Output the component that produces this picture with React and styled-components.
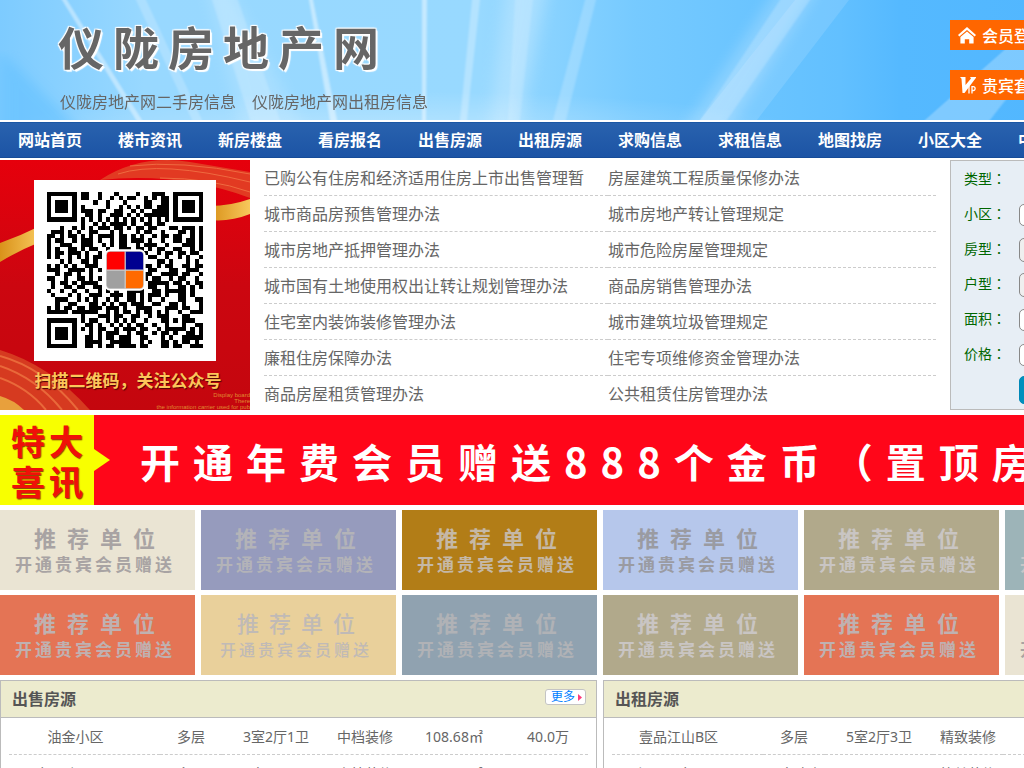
import React from "react";
import styled, { createGlobalStyle } from "styled-components";

const navItems = [
  "网站首页",
  "楼市资讯",
  "新房楼盘",
  "看房报名",
  "出售房源",
  "出租房源",
  "求购信息",
  "求租信息",
  "地图找房",
  "小区大全",
  "中介机构",
];

const articles = [
  "已购公有住房和经济适用住房上市出售管理暂",
  "房屋建筑工程质量保修办法",
  "城市商品房预售管理办法",
  "城市房地产转让管理规定",
  "城市房地产抵押管理办法",
  "城市危险房屋管理规定",
  "城市国有土地使用权出让转让规划管理办法",
  "商品房销售管理办法",
  "住宅室内装饰装修管理办法",
  "城市建筑垃圾管理规定",
  "廉租住房保障办法",
  "住宅专项维修资金管理办法",
  "商品房屋租赁管理办法",
  "公共租赁住房管理办法",
];

const ads = [
  { bg: "#eae4d3", color: "#a8a3a3" },
  { bg: "#969bbd", color: "#b3b3b8" },
  { bg: "#b27d17", color: "#c5b8a6" },
  { bg: "#b6c7eb", color: "#9a9ba2" },
  { bg: "#b1a98b", color: "#c9c5c3" },
  { bg: "#9db4b8", color: "#c5c7c9" },
  { bg: "#e47455", color: "#bfb1b1" },
  { bg: "#e9d09b", color: "#c0bab6", light: true },
  { bg: "#90a2b0", color: "#b0b2b6" },
  { bg: "#b1a98b", color: "#c9c5c3" },
  { bg: "#e47455", color: "#bfb1b1" },
  { bg: "#eae4d3", color: "#a8a3a3" },
];

const saleRows = [
  ["油金小区", "多层", "3室2厅1卫", "中档装修", "108.68㎡", "40.0万"],
  ["春晖路158号", "多层", "4室2厅2卫", "中档装修", "146.09㎡", "60.8万"],
];

const rentRows = [
  ["壹品江山B区", "多层", "5室2厅3卫", "精致装修"],
  ["红云国文翠园", "四室改中", "", "简单装修"],
];

const qrRows = [
  "#######.##..#...#....#...###..#######",
  "#.....#.##..#..#.#.##..#.#.##.#.....#",
  "#.###.#....#..#...#....##..##.#.###.#",
  "#.###.#.#.....#..#.#.#.##.###.#.###.#",
  "#.###.#.###.##..##..#.#..####.#.###.#",
  "#.....#..##.#..###.#.#.######.#.....#",
  "#######.#.#.#.#.#.#.#.#.#.#.#.#######",
  "........#..#.#.####.#..##.##.........",
  "...#..#.#.#.###.##.#.##.##...##.###.#",
  ".###.#.#..##...#.#...#.##..#...##.#.#",
  "##.#.##.#.#.####.##.#.#..#.##.##..#.#",
  "#.##..#.###.#..#.##.###.#..#..##.##.#",
  "#..###..###..#.#.##..#.###..#...###.#",
  "#.#..##.#.##..#..###.##.#.##..##..#.#",
  "#.##.###.#..#..........#..#.##.##.##.",
  "#.#..#.#.#.##...........##..#..#.#..#",
  "...#.#..##.#..............##.#...#.#.",
  "#.#.#.#..###...........##.#.##..##.##",
  "###..####.#.#...........##...##..###.",
  "..#.##.#..#............##..####.##..#",
  "##..#..##.#.#..........#.##..#.##..#.",
  ".#.##.#.####............#####.##.#.##",
  ".#..##.##..##...........##..#..##.#.#",
  "#..#..#..#..#.#.#..####..##.#####.#..",
  ".#...#.#..###..###.##.#.###.#..##.#..",
  "..###..#.#.#..#.#..##.#.#..#...##..##",
  "..#..##...##.#.#.##.###..##..##.#...#",
  "#.#.##.##.###.###.#..####...###.##..#",
  "#####.######..#.#.##.#.##.#.#..#..###",
  "........#...###.##..##..#.###...##...",
  "#######.#.##..#.#.#.#..#...##.#.###..",
  "#.....#..##.#..#.#.#.##..#..#...#..##",
  "#.###.#.#.#.##..#.###.##..#.#####.#.#",
  "#.###.#...#.#.###..#.##..#.##.#..##.#",
  "#.###.#..##.#.##.###..##...#.#..#####",
  "#.....#..####..#####..#.#..##.#.##.#.",
  "#######..##.#.##.####.##...##.##..###",
];

const Rays = () => (
  <RaysSvg viewBox="0 0 1200 120" preserveAspectRatio="none" aria-hidden="true">
    <defs>
      <linearGradient id="sky" x1="0" x2="1" y1="0" y2="0">
        <stop offset="0" stopColor="#7dcbff" />
        <stop offset="0.12" stopColor="#98d8ff" />
        <stop offset="0.4" stopColor="#98d9ff" />
        <stop offset="0.53" stopColor="#76caff" />
        <stop offset="0.7" stopColor="#62c0ff" />
        <stop offset="0.75" stopColor="#55b9ff" />
        <stop offset="1" stopColor="#4eb5ff" />
      </linearGradient>
      <radialGradient id="lift" cx="0.33" cy="1.1" r="0.34">
        <stop offset="0" stopColor="#fff" stopOpacity="0.3" />
        <stop offset="1" stopColor="#fff" stopOpacity="0" />
      </radialGradient>
      <filter id="soft" x="-20%" y="-20%" width="140%" height="140%">
        <feGaussianBlur stdDeviation="1 0" />
      </filter>
      <filter id="wide" x="-50%" y="-20%" width="200%" height="140%">
        <feGaussianBlur stdDeviation="8 0" />
      </filter>
    </defs>
    <rect width="1200" height="120" fill="url(#sky)" />
    <rect width="1200" height="120" fill="url(#lift)" />
    <path d="M0 50L0 120 70 120Z" fill="#5fbfff" opacity="0.5" filter="url(#wide)" />
    <path d="M210 0L235 0 300 120 240 120Z" fill="#fff" opacity="0.15" filter="url(#wide)" />
    <path d="M505 0L545 0 520 120 490 120Z" fill="#fff" opacity="0.25" filter="url(#wide)" />
    <path d="M770 0L810 0 735 120 690 120Z" fill="#fff" opacity="0.2" filter="url(#wide)" />
    <g fill="#fff" filter="url(#soft)">
      <path d="M62 0L67 0 142 120 136 120Z" opacity="0.4" />
      <path d="M136 0L146 0 202 120 192 120Z" opacity="0.2" />
      <path d="M212 0L238 0 280 120 250 120Z" opacity="0.18" />
      <path d="M309 0L313 0 337 120 330 120Z" opacity="0.45" />
      <path d="M422 0L427 0 426 120 422 120Z" opacity="0.45" />
      <path d="M472 0L480 0 467 120 460 120Z" opacity="0.28" />
      <path d="M515 0L533 0 520 120 508 120Z" opacity="0.15" />
      <path d="M585 0L596 0 566 120 553 120Z" opacity="0.2" />
      <path d="M780 0L810 0 727 120 700 120Z" opacity="0.18" />
    </g>
    <path d="M795 0L849 0 757 120 700 120Z" fill="#fff" opacity="0.12" />
    <path d="M1010 45L1060 30 990 120 925 120Z" fill="#fff" opacity="0.25" filter="url(#soft)" />
  </RaysSvg>
);

const QrCode = () => (
  <QrSvg viewBox="0 0 37 37" shapeRendering="crispEdges" role="img" aria-label="二维码">
    {qrRows.map((row, y) =>
      row.split("").map((cell, x) =>
        cell === "#" ? <rect key={`${x}-${y}`} x={x} y={y} width="1" height="1" /> : null
      )
    )}
    <g shapeRendering="auto">
      <rect x="13.6" y="13.6" width="9.8" height="9.8" rx="1.4" fill="#fff" />
      <rect x="14" y="14" width="9" height="9" rx="1" fill="#ccc" />
      <path d="M14.2 18.4V15q0-.8.8-.8h3.4v4.2z" fill="#f00" />
      <path d="M18.7 18.4v-4.2H22q.8 0 .8.8v3.4z" fill="#000090" />
      <path d="M14.2 18.7h4.2v4.1H15q-.8 0-.8-.8z" fill="#a0a0a0" />
      <path d="M18.7 18.7h4.1V22q0 .8-.8.8h-3.3z" fill="#ff6a00" />
    </g>
  </QrSvg>
);

const Ribbons = () => (
  <RibbonSvg viewBox="0 0 250 250" preserveAspectRatio="none" aria-hidden="true">
    <defs>
      <linearGradient id="red" x1="0" x2="0" y1="0" y2="1">
        <stop offset="0" stopColor="#e6000c" />
        <stop offset="0.5" stopColor="#cc0610" />
        <stop offset="1" stopColor="#c4060e" />
      </linearGradient>
      <linearGradient id="gold" x1="0" x2="1" y1="0" y2="0">
        <stop offset="0" stopColor="#d9921a" />
        <stop offset="1" stopColor="#f8c85c" />
      </linearGradient>
    </defs>
    <rect width="250" height="250" fill="url(#red)" />
    <path d="M100 20Q140-6 190 2L250 12V38Q180 12 100 20Z" fill="#e23a22" />
    <path d="M118 14Q160 0 250 22M130 6Q180 0 250 14M160 18Q210 18 250 32" stroke="#ef6a40" fill="none" />
    <path d="M0 83Q20 76 40 66V82Q18 91 0 102Z" fill="url(#gold)" />
    <path d="M210 46Q230 46 250 39V54Q230 62 210 60Z" fill="url(#gold)" />
    <path d="M0 190Q50 205 90 250H0Z" fill="#d63a20" />
    <path d="M0 196Q44 208 78 250M0 206Q36 218 62 250M0 218Q28 228 46 250" stroke="#e9693a" strokeWidth="2" fill="none" />
    <path d="M0 236Q14 240 24 250H0Z" fill="#e8a03c" />
  </RibbonSvg>
);

const HomeIcon = () => (
  <svg width="18" height="17" viewBox="0 0 18 17" fill="#fff" aria-hidden="true">
    <path d="M9 0L0 8l1.4 1.6L9 3l7.6 6.6L18 8z" />
    <path d="M9 4.6L2.4 10v6.5h4.4v-4.2h4.4v4.2h4.4V10z" />
  </svg>
);

const VipIcon = () => (
  <svg width="18" height="18" viewBox="0 0 18 18" aria-hidden="true">
    <path d="M2 1h5.500v8L13 2.500 12 1h6.500L6.500 17H4.500L3.500 2.800z" fill="#fff" />
    <path d="M11 10v7.500M14 17.500v-6.800h1.200q1.900 0 1.900 1.900t-1.900 1.900H14" stroke="#fff" strokeWidth="1.300" fill="none" />
  </svg>
);

const Listing = ({ title, rows, more }) => (
  <Panel>
    <PanelHead>
      <PanelTitle>{title}</PanelTitle>
      {more && (
        <MoreLink href="#more">
          更多
          <svg width="4" height="7" viewBox="0 0 4 7" aria-hidden="true">
            <path d="M0 0L4 3.500 0 7z" fill="#ff3b7b" />
          </svg>
        </MoreLink>
      )}
    </PanelHead>
    <Table>
      <colgroup>
        <NameCol />
        <FloorCol />
        <WideCol />
        <FitCol />
        <WideCol />
        <col />
      </colgroup>
      <tbody>
        {rows.map((row) => (
          <tr key={row[0]}>
            {[0, 1, 2, 3, 4, 5].map((i) => (
              <Cell key={i} $name={i === 0}>
                {row[i]}
              </Cell>
            ))}
          </tr>
        ))}
      </tbody>
    </Table>
  </Panel>
);

const App = () => {
  return (
    <Page>
      <GlobalStyle />
      <Header>
        <Rays />
        <Brand>
          <SiteName>仪陇房地产网</SiteName>
          <Slogan>
            <span>仪陇房地产网二手房信息</span>
            <span>仪陇房地产网出租房信息</span>
          </Slogan>
        </Brand>
        <Actions>
          <ActionButton type="button">
            <HomeIcon />
            会员登录
          </ActionButton>
          <ActionButton type="button">
            <VipIcon />
            贵宾套餐
          </ActionButton>
        </Actions>
      </Header>
      <Nav>
        {navItems.map((item) => (
          <NavLink key={item} href="#nav">
            {item}
          </NavLink>
        ))}
      </Nav>
      <TopRow>
        <QrPanel>
          <Ribbons />
          <QrBox>
            <QrCode />
          </QrBox>
          <QrCaption>扫描二维码，关注公众号</QrCaption>
          <FinePrint>
            Display board
            <br />
            There
            <br />
            the information carrier used for pub
          </FinePrint>
        </QrPanel>
        <Articles>
          {articles.map((item) => (
            <Article key={item}>
              <a href="#article">{item}</a>
            </Article>
          ))}
        </Articles>
        <SearchForm>
          <Field>
            <Label as="span">类型：</Label>
          </Field>
          <Field>
            <Label htmlFor="community">小区：</Label>
            <TextInput id="community" />
          </Field>
          <Field>
            <Label htmlFor="kind">房型：</Label>
            <Select id="kind" />
          </Field>
          <Field>
            <Label htmlFor="layout">户型：</Label>
            <Select id="layout" />
          </Field>
          <Field>
            <Label htmlFor="area">面积：</Label>
            <TextInput id="area" />
          </Field>
          <Field>
            <Label htmlFor="price">价格：</Label>
            <TextInput id="price" />
          </Field>
          <SearchButton type="button" aria-label="搜索" />
        </SearchForm>
      </TopRow>
      <Banner>
        <BannerTag>
          <span>特大</span>
          <span>喜讯</span>
        </BannerTag>
        <BannerArrow />
        <BannerText>开通年费会员赠送888个金币（置顶房源）</BannerText>
      </Banner>
      <Ads>
        {ads.map((ad, i) => (
          <Ad key={i} href="#ad" $bg={ad.bg} $color={ad.color} $light={ad.light}>
            <AdTitle $light={ad.light}>推荐单位</AdTitle>
            <AdText $light={ad.light}>开通贵宾会员赠送</AdText>
          </Ad>
        ))}
      </Ads>
      <Listings>
        <Listing title="出售房源" rows={saleRows} more />
        <Listing title="出租房源" rows={rentRows} />
      </Listings>
    </Page>
  );
};

const GlobalStyle = createGlobalStyle`
  * {
    box-sizing: border-box;
  }
  body {
    margin: 0;
    overflow: hidden;
    background: #fff;
    color: #666;
    font-family: "Noto Sans", "Noto Sans CJK SC", sans-serif;
    font-size: 14px;
  }
  a {
    color: inherit;
    text-decoration: none;
  }
  button, input, select {
    font: inherit;
  }
`;

const Page = styled.div`
  min-width: 1200px;
  height: 100vh;
  overflow: hidden;
`;

const Header = styled.header`
  position: relative;
  display: flex;
  justify-content: space-between;
  height: 120px;
`;
const RaysSvg = styled.svg`
  position: absolute;
  inset: 0;
  width: 100%;
  height: 100%;
`;
const Brand = styled.div`
  position: relative;
  padding: 15px 0 0 58px;
`;
const SiteName = styled.h1`
  margin: 0;
  font-size: 46px;
  line-height: 64px;
  letter-spacing: 9px;
  text-shadow: 1px 1px 1px #fff, -1px -1px 1px #fff, 1px -1px 1px #fff, -1px 1px 1px #fff, 2px 2px 1px #fff;
`;
const Slogan = styled.div`
  display: flex;
  gap: 16px;
  margin-top: 11px;
  padding-left: 2px;
  font-size: 16px;
  line-height: 24px;
`;
const Actions = styled.div`
  position: relative;
  display: flex;
  flex-direction: column;
  gap: 20px;
  width: 250px;
  padding-top: 20px;
  align-items: flex-start;
`;
const ActionButton = styled.button`
  display: flex;
  align-items: center;
  gap: 6px;
  height: 30px;
  padding: 0 8px;
  border: 0;
  background: #ff6600;
  color: #fff;
  font-size: 16px;
  font-weight: 500;
`;

const Nav = styled.nav`
  display: grid;
  grid-template-columns: repeat(12, 1fr);
  height: 36px;
  margin: 2px 0;
  border-top: 1px solid #1b57a5;
  border-bottom: 1px solid #164c98;
  background: linear-gradient(#2962ae, #1c54a5);
`;
const NavLink = styled.a`
  color: #fff;
  font-size: 16px;
  font-weight: bold;
  line-height: 35px;
  text-align: center;
`;

const TopRow = styled.div`
  display: flex;
  height: 250px;
`;
const QrPanel = styled.div`
  position: relative;
  display: flex;
  flex-direction: column;
  align-items: center;
  flex: 0 0 250px;
  padding-top: 20px;
  overflow: hidden;
`;
const RibbonSvg = styled.svg`
  position: absolute;
  inset: 0;
  width: 100%;
  height: 100%;
`;
const QrBox = styled.div`
  position: relative;
  padding: 12px 13px 13px;
  background: #fff;
`;
const QrSvg = styled.svg`
  display: block;
  width: 156px;
  height: 156px;
`;
const QrCaption = styled.div`
  position: relative;
  margin-top: 8px;
  padding-left: 6px;
  color: #fcc65a;
  font-size: 17px;
  font-weight: bold;
  line-height: 24px;
  text-shadow: 1px 1px 1px #4a0505;
`;
const FinePrint = styled.div`
  position: absolute;
  right: 0;
  bottom: 0;
  color: #e08a30;
  font-family: "Liberation Sans", sans-serif;
  font-size: 6px;
  line-height: 6px;
  text-align: right;
  white-space: nowrap;
`;
const Articles = styled.ul`
  display: grid;
  grid-template-columns: 344px 1fr;
  grid-auto-rows: 36px;
  flex: 1;
  margin: 0 14px;
  padding: 0;
  list-style: none;
  overflow: hidden;
`;
const Article = styled.li`
  border-bottom: 1px dashed #ccc;
  font-size: 16px;
  line-height: 36px;

  &:nth-last-child(-n + 2) {
    border-bottom: 0;
  }
`;
const SearchForm = styled.form`
  flex: 0 0 250px;
  padding: 1px 0 0 13px;
  border: 1px solid #bbb;
  background: #e7eef5;
`;
const Field = styled.div`
  display: flex;
  align-items: center;
  height: 35px;
`;
const Label = styled.label`
  flex: 0 0 55px;
  padding-bottom: 4px;
  color: #006600;
  font-family: "Noto Sans CJK TC", sans-serif;
  font-size: 14px;
`;
const TextInput = styled.input`
  width: 150px;
  height: 22px;
  border: 1px solid #888;
  border-radius: 5px;
  background: #fff;
`;
const Select = styled.select`
  width: 150px;
  height: 24px;
  border: 1px solid #888;
  border-radius: 5px;
  background: #efefef;
`;
const SearchButton = styled.button`
  display: block;
  width: 100px;
  height: 28px;
  margin-top: 4px;
  margin-left: 55px;
  border: 1px solid #0088b8;
  border-radius: 5px;
  background: #0090bd;
`;

const Banner = styled.div`
  display: flex;
  align-items: center;
  height: 90px;
  margin: 5px 0;
  overflow: hidden;
  background: #ff0619;
`;
const BannerTag = styled.div`
  display: grid;
  grid-auto-rows: 40px;
  flex: none;
  width: 94px;
  height: 90px;
  padding: 7px 0 0 11px;
  background: #f8ff00;
  color: #f01008;
  font-size: 34px;
  font-weight: bold;
  letter-spacing: 4px;
  line-height: 40px;
  text-shadow: 1px 1px 1px #8a3a00;
`;
const BannerArrow = styled.div`
  flex: none;
  border: 11px solid transparent;
  border-left: 16px solid #f8ff00;
  border-right: 0;
`;
const BannerText = styled.div`
  margin-left: 30px;
  padding-top: 2px;
  color: #fff;
  font-family: "Noto Sans CJK SC", sans-serif;
  font-size: 40px;
  font-weight: bold;
  letter-spacing: 13px;
  white-space: nowrap;
`;

const Ads = styled.div`
  display: grid;
  grid-template-columns: repeat(6, 1fr);
  grid-auto-rows: 80px;
  gap: 5px 6px;
`;
const Ad = styled.a`
  padding: 13px 0 0 ${({ $light }) => ($light ? "19px" : "15px")};
  background: ${({ $bg }) => $bg};
  color: ${({ $color }) => $color};
  font-weight: ${({ $light }) => ($light ? 500 : 700)};
`;
const AdTitle = styled.div`
  padding-left: ${({ $light }) => ($light ? "17px" : "19px")};
  font-size: 22px;
  letter-spacing: ${({ $light }) => ($light ? "10px" : "11px")};
  line-height: 30px;
`;
const AdText = styled.div`
  font-size: ${({ $light }) => ($light ? "16px" : "17px")};
  letter-spacing: 3px;
  line-height: 24px;
`;

const Listings = styled.div`
  display: grid;
  grid-template-columns: 1fr 1fr;
  gap: 6px;
  margin-top: 5px;
`;
const Panel = styled.section`
  border: 1px solid #bbb;
`;
const PanelHead = styled.div`
  display: flex;
  justify-content: space-between;
  height: 37px;
  padding: 8px 10px 0 11px;
  border-bottom: 1px solid #bbb;
  background: #ecebce;
`;
const PanelTitle = styled.h2`
  margin: 0;
  color: #555;
  font-size: 16px;
  line-height: 21px;
`;
const MoreLink = styled.a`
  display: flex;
  align-items: center;
  gap: 3px;
  height: 16px;
  padding: 0 3px 0 5px;
  border: 1px solid #c4c4c4;
  border-radius: 3px;
  background: #fff;
  color: #0080ff;
  font-size: 12px;
  line-height: 14px;
`;
const Table = styled.table`
  width: calc(100% - 16px);
  margin: 0 8px;
  border-collapse: separate;
  border-spacing: 0;
  table-layout: fixed;
`;
const NameCol = styled.col`
  width: 151px;
`;
const FloorCol = styled.col`
  width: 62px;
`;
const WideCol = styled.col`
  width: 108px;
`;
const FitCol = styled.col`
  width: 70px;
`;
const Cell = styled.td`
  height: 37px;
  padding: 0 ${({ $name }) => ($name ? "18px" : "0")} 1px 0;
  border-bottom: 1px dashed #ccc;
  font-size: 14px;
  text-align: center;
  white-space: nowrap;
`;

export default App;
